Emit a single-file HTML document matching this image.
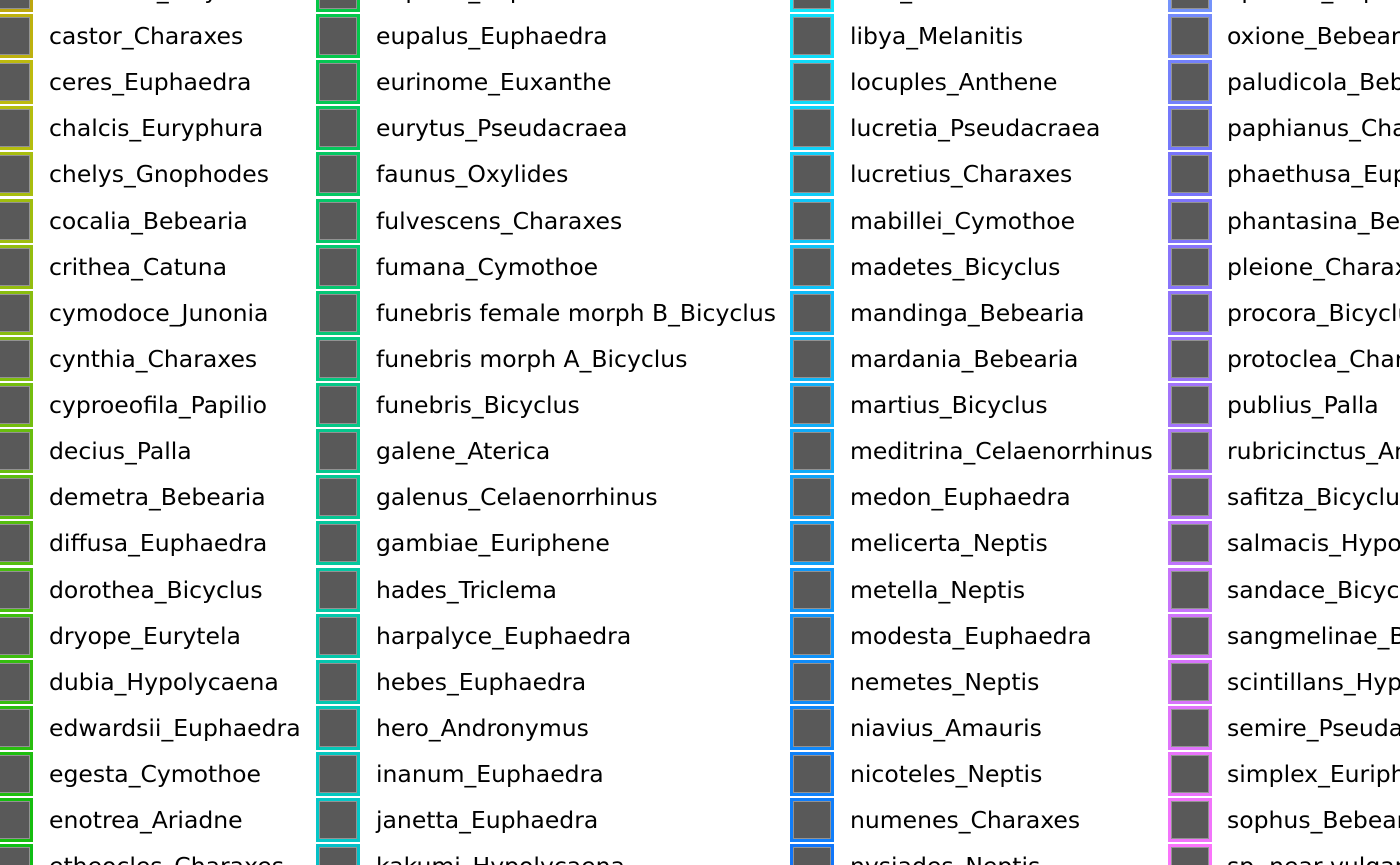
<!DOCTYPE html>
<html><head><meta charset="utf-8"><style>
html,body{margin:0;padding:0;width:1400px;height:865px;overflow:hidden;background:#fff;position:relative}
.k{position:absolute;width:38px;height:38px;background:#595959;border:3px solid;box-shadow:0 0 0 1px rgba(255,255,255,.35) inset}
.t{position:absolute;font-family:"DejaVu Sans","Liberation Sans",sans-serif;font-size:23.5px;color:#000;white-space:nowrap;line-height:30px}
</style></head><body>
<div id="c"></div>
<script>
var cols=[
{kx:-11,tx:49,h0:52,h1:122,s:85,l:40,n:["carshena_Bicyclus","castor_Charaxes","ceres_Euphaedra","chalcis_Euryphura","chelys_Gnophodes","cocalia_Bebearia","crithea_Catuna","cymodoce_Junonia","cynthia_Charaxes","cyproeofila_Papilio","decius_Palla","demetra_Bebearia","diffusa_Euphaedra","dorothea_Bicyclus","dryope_Eurytela","dubia_Hypolycaena","edwardsii_Euphaedra","egesta_Cymothoe","enotrea_Ariadne","etheocles_Charaxes"]},
{kx:316,tx:376,h0:140,h1:182,s:95,l:40,n:["eupalus_Euphaedra","eupalus_Euphaedra","eurinome_Euxanthe","eurytus_Pseudacraea","faunus_Oxylides","fulvescens_Charaxes","fumana_Cymothoe","funebris female morph B_Bicyclus","funebris morph A_Bicyclus","funebris_Bicyclus","galene_Aterica","galenus_Celaenorrhinus","gambiae_Euriphene","hades_Triclema","harpalyce_Euphaedra","hebes_Euphaedra","hero_Andronymus","inanum_Euphaedra","janetta_Euphaedra","kakumi_Hypolycaena"]},
{kx:790,tx:850,h0:185,h1:214,s:95,l:52,n:["leda_Melanitis","libya_Melanitis","locuples_Anthene","lucretia_Pseudacraea","lucretius_Charaxes","mabillei_Cymothoe","madetes_Bicyclus","mandinga_Bebearia","mardania_Bebearia","martius_Bicyclus","meditrina_Celaenorrhinus","medon_Euphaedra","melicerta_Neptis","metella_Neptis","modesta_Euphaedra","nemetes_Neptis","niavius_Amauris","nicoteles_Neptis","numenes_Charaxes","nysiades_Neptis"]},
{kx:1168,tx:1227,h0:226,h1:300,s:95,l:72,n:["ophione_Euphaedra","oxione_Bebearia","paludicola_Bebearia","paphianus_Charaxes","phaethusa_Euphaedra","phantasina_Bebearia","pleione_Charaxes","procora_Bicyclus","protoclea_Charaxes","publius_Palla","rubricinctus_Anthene","safitza_Bicyclus","salmacis_Hypolimnas","sandace_Bicyclus","sangmelinae_Bebearia","scintillans_Hypolycaena","semire_Pseudacraea","simplex_Euriphene","sophus_Bebearia","sp. near vulgaris_Bicyclus"]}];
var h='';
cols.forEach(function(c){for(var i=0;i<20;i++){var cy=-10.1+46.12*i;var hue=c.h0+(c.h1-c.h0)*i/19;
h+='<div class="k" style="left:'+c.kx+'px;top:'+(cy-22).toFixed(1)+'px;border-color:hsl('+hue.toFixed(0)+','+c.s+'%,'+c.l+'%)"></div>';
h+='<div class="t" style="left:'+c.tx+'px;top:'+(cy-15).toFixed(1)+'px">'+c.n[i]+'</div>';}});
document.getElementById('c').innerHTML=h;
</script>
</body></html>
